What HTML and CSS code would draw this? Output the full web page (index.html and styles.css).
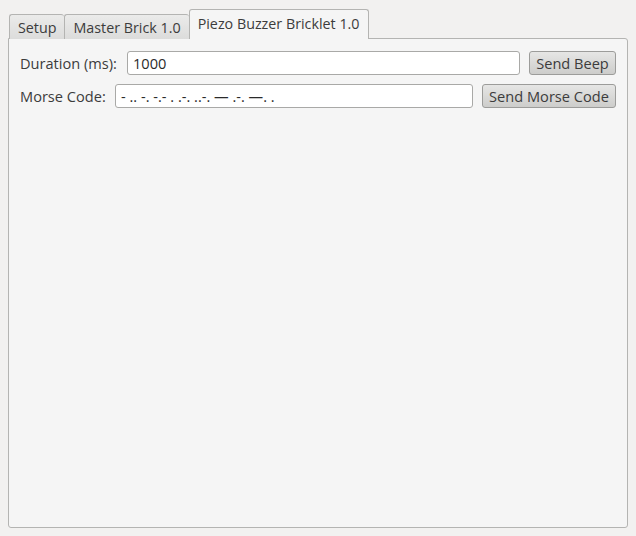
FILE: index.html
```html
<!DOCTYPE html>
<html>
<head>
<meta charset="utf-8">
<link rel="stylesheet" href="styles.css">
</head>
<body>
<div class="window">
  <div class="tabbar">
    <div class="tab">Setup</div>
    <div class="tab">Master Brick 1.0</div>
    <div class="tab active">Piezo Buzzer Bricklet 1.0</div>
  </div>
  <div class="panel">
    <div class="row">
      <span class="label label-duration">Duration (ms):</span>
      <div class="input">1000</div>
      <button class="btn btn-beep">Send Beep</button>
    </div>
    <div class="row">
      <span class="label label-morse">Morse Code:</span>
      <div class="input">- .. -. -.- . .-. ..-. — .-. —. .</div>
      <button class="btn btn-morse">Send Morse Code</button>
    </div>
  </div>
</div>
</body>
</html>
```
FILE: styles.css
```css
* { box-sizing: border-box; }
html, body { margin: 0; padding: 0; }
body {
  background: #f2f1f0;
  font-family: "Open Sans", "DejaVu Sans", sans-serif;
  font-size: 14.6px;
  color: #3c3c3c;
  width: 636px;
  height: 536px;
  overflow: hidden;
}
.window {
  padding: 9px 0 0 8px;
}
.tabbar {
  display: flex;
  align-items: flex-end;
  padding-left: 1px;
  position: relative;
  z-index: 2;
  margin-bottom: -1px;
}
.tab {
  height: 25px;
  padding: 0 8px;
  display: flex;
  align-items: center;
  border: 1px solid #b4b4b2;
  border-bottom: none;
  border-right: none;
  border-radius: 3px 3px 0 0;
  background: linear-gradient(#ebebea, #dcdcdb);
  color: #3c3c3c;
  font-size: 14.3px;
  white-space: nowrap;
}
.tab.active {
  height: 30px;
  background: #f5f5f5;
  border-right: 1px solid #b4b4b2;
  padding-bottom: 2px;
  border-radius: 3px 3px 0 0;
}
.panel {
  width: 620px;
  height: 490px;
  border: 1px solid #b4b4b2;
  border-radius: 0 3px 3px 3px;
  background: #f5f5f5;
  padding: 12px 11px 0 11px;
  display: flex;
  flex-direction: column;
  gap: 9px;
}
.row {
  display: flex;
  align-items: center;
  height: 24px;
}
.label {
  flex: none;
  white-space: nowrap;
}
.label-duration { width: 107px; }
.label-morse { width: 95px; }
.input {
  flex: 1;
  height: 24px;
  background: #ffffff;
  border: 1px solid #a9a9a7;
  border-radius: 3px;
  padding: 0 5px;
  display: flex;
  align-items: center;
  color: #2a2a2a;
  white-space: nowrap;
  overflow: hidden;
}
.btn {
  flex: none;
  margin-left: 9px;
  height: 24px;
  border: 1px solid #9c9c9a;
  border-radius: 3px;
  background: linear-gradient(#e6e6e5, #cdcdcb);
  font-family: inherit;
  font-size: 14.6px;
  color: #3c3c3c;
  padding: 0;
}
.btn-beep { width: 87px; }
.btn-morse { width: 134px; }
```
